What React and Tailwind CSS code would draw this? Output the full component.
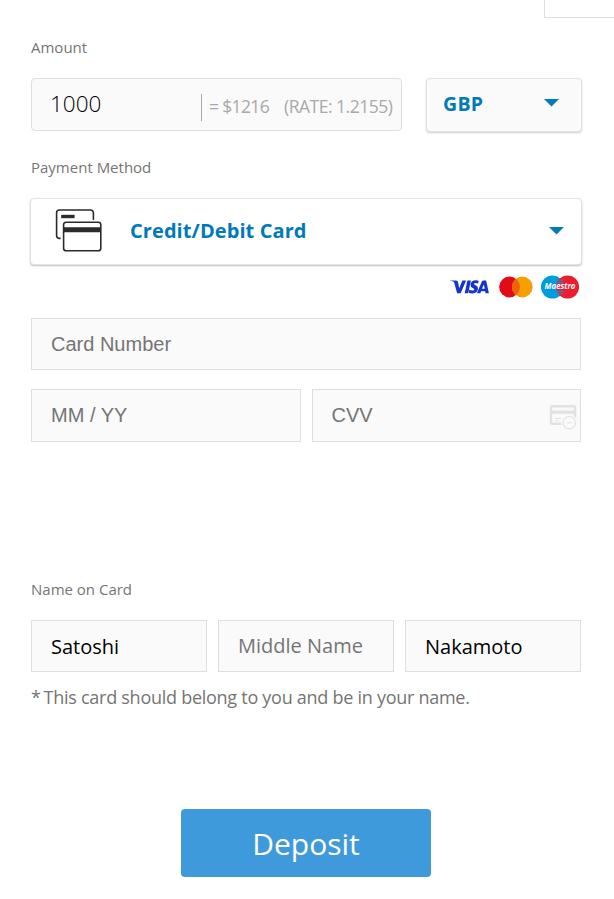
// DepositForm
import { useState } from 'react';

function Caret({ className = '' }) {
  return (
    <svg className={`shrink-0 ${className}`} width="15" height="8" viewBox="0 0 15 8">
      <path d="M0 0H15L7.5 7.5Z" fill="#007ab8" />
    </svg>
  );
}

function CardsIcon() {
  return (
    <svg className="-mt-[3px] shrink-0" width="47" height="43" viewBox="0 0 47 43" fill="none" stroke="#2b2b2b" strokeWidth="1.6" strokeLinecap="round">
      <path d="M5 29.4H4A2.8 2.8 0 0 1 1.6 26.6V3.8A2.8 2.8 0 0 1 4.4 1H35.6A2.8 2.8 0 0 1 38.4 3.8V10.5" />
      <path d="M6.2 7.5H19.6" strokeWidth="3.4" strokeLinecap="butt" />
      <rect x="8.6" y="13.2" width="37.2" height="28.6" rx="2.6" />
      <path d="M8.6 20.8H45.8" strokeWidth="5" strokeLinecap="butt" />
    </svg>
  );
}

function CvvIcon() {
  return (
    <svg className="absolute right-[4px] top-[15px]" width="28" height="26" viewBox="0 0 28 26" fill="none" stroke="#e2e2e2">
      <rect x="2" y="2.2" width="24" height="17.6" rx="1" strokeWidth="2.4" />
      <path d="M1 8.2H27" strokeWidth="3.2" />
      <path d="M6 14.5H12M6 17H10" />
      <circle cx="20.2" cy="18.7" r="8" fill="#fafafa" stroke="none" />
      <circle cx="20.2" cy="18.7" r="6.2" strokeWidth="1.2" />
      <path d="M18.2 18.7H22.2" strokeWidth="1.2" />
    </svg>
  );
}

function CardBrands() {
  return (
    <div className="flex items-center justify-end pr-[2px]">
      <svg width="39" height="14" viewBox="0 0 39 14" className="mr-[10px]" fill="#1434cb">
        <path d="M0 .5H6.2Q7.7 .5 8 2L9.2 8.3L12.4 .5H16.1L10.7 13.2H7.1L4.3 3Q4.1 2 3.2 1.6Q1.8 1 0 .8Z" />
        <path d="M17.4 .5H20.9L18.2 13.2H14.7Z" />
        <path d="M28.7 .8L28.1 3.6Q26.7 2.9 25.2 3Q24 3.1 24.1 3.9Q24.1 4.5 25.7 5.3Q28.3 6.6 28 8.8Q27.5 13.3 22.3 13.4Q20.2 13.4 18.7 12.7L19.3 9.8Q21 10.7 22.6 10.6Q24.2 10.5 24.3 9.5Q24.3 8.9 22.7 8.1Q20.3 6.9 20.5 4.6Q20.9 .5 25.7 .3Q27.4 .3 28.7 .8Z" />
        <path fillRule="evenodd" d="M33.3 .5H36.2L38.9 13.2H35.6L35.2 11.2H31.1L30.3 13.2H26.9L31.8 1.5Q32.2 .5 33.3 .5ZM33.9 4.6L32 8.7H34.7Z" />
      </svg>
      <svg width="34" height="22" viewBox="0 0 34 22" className="mr-[8px]">
        <circle cx="10.5" cy="11" r="10.4" fill="#e30b17" />
        <circle cx="23.3" cy="11" r="10.4" fill="#f79f00" />
        <path d="M16.9 2.8A10.4 10.4 0 0 1 16.9 19.2A10.4 10.4 0 0 1 16.9 2.8Z" fill="#eb6209" />
      </svg>
      <svg width="38" height="24" viewBox="0 0 38 24">
        <circle cx="11.4" cy="12" r="11.5" fill="#009ddd" />
        <circle cx="26.6" cy="12" r="11.5" fill="#ed1c2e" />
        <path d="M16 5.3H22M15.4 7.6H22.7M15.4 16.4H22.7M16 18.7H22" stroke="#009ddd" strokeWidth="1" />
        <text x="19" y="14.4" textAnchor="middle" textLength="31" lengthAdjust="spacingAndGlyphs" fill="#fff" fontFamily="Open Sans" fontSize="8.4" fontWeight="700" fontStyle="italic">Maestro</text>
      </svg>
    </div>
  );
}

function Field({ className = '', ...props }) {
  return (
    <input
      className={`block h-[52px] w-full min-w-0 border border-[#dfdfdf] bg-[#fafafa] px-[19px] text-[20px] text-black outline-none placeholder:text-[#757575] ${className}`}
      {...props}
    />
  );
}

export default function App() {
  const [amount, setAmount] = useState('1000');

  return (
    <div className="min-h-[899px] bg-white font-['Open_Sans',sans-serif] text-[#757575]">
      <div className="ml-auto h-[18px] w-[70px] border-b border-l border-[#dfdfdf]" />

      <div className="flex flex-col pl-[31px] pr-[33px]">
        <label className="mt-[17px] h-[43px] text-[15px] leading-[24px]">Amount</label>
        <div className="flex items-start">
          <div className="flex h-[53px] w-[371px] shrink-0 items-center rounded-[4px] border border-[#dfdfdf] bg-[#fafafa]">
            <input
              value={amount}
              onChange={(e) => setAmount(e.target.value)}
              className="h-full w-[169px] bg-transparent pb-[3px] pl-[18px] text-[22.5px] font-[350] text-black outline-none"
            />
            <div className="mt-[5px] flex h-[27px] items-center whitespace-pre border-l border-[#a9a9a9] pb-[2px] pl-[7px] text-[17.5px] tracking-[-0.5px] text-[#a9a9a9]">
              <span className="w-[75px] tracking-[-0.65px]">= $1216</span>
              <span>(RATE: 1.2155)</span>
            </div>
          </div>
          <button className="ml-[24px] flex h-[54px] w-[156px] shrink-0 items-center justify-between rounded-[4px] border border-[#e3e3e3] bg-[#fafafa] pb-[3px] pl-[16px] pr-[22px] text-[19.5px] font-bold tracking-[0.3px] text-[#007ab8] shadow-[0_1px_2px_rgba(0,0,0,0.2)]">
            GBP
            <Caret className="-mt-[2px]" />
          </button>
        </div>

        <label className="mt-[23px] h-[43px] text-[15px] leading-[24px]">Payment Method</label>
        <button className="-mx-px flex h-[67px] w-[552px] items-center rounded-[4px] border border-[#e3e3e3] bg-white pl-[24px] pr-[17px] text-[20px] font-bold text-[#007ab8] shadow-[0_1px_2px_rgba(0,0,0,0.25)]">
          <CardsIcon />
          <span className="-mt-[2px] ml-[28px] flex-1 text-left tracking-[0.08px]">Credit/Debit Card</span>
          <Caret className="-mt-[2px]" />
        </button>

        <div className="mt-[10px] h-[43px]">
          <CardBrands />
        </div>

        <Field placeholder="Card Number" className="font-['Liberation_Sans',sans-serif]" />
        <div className="mt-[19px] flex gap-[11px]">
          <div className="w-[270px]">
            <Field placeholder="MM / YY" className="h-[53px] font-['Liberation_Sans',sans-serif]" />
          </div>
          <div className="relative w-[269px]">
            <Field placeholder="CVV" className="h-[53px] pl-[18.5px] font-['Liberation_Sans',sans-serif]" />
            <CvvIcon />
          </div>
        </div>

        <label className="mt-[135px] h-[43px] text-[15px] leading-[24px]">Name on Card</label>
        <div className="grid grid-cols-3 gap-[11px]">
          <Field defaultValue="Satoshi" />
          <Field placeholder="Middle Name" className="pb-[2px]" />
          <Field defaultValue="Nakamoto" />
        </div>
        <p className="mt-[12px] text-[18px] leading-[27px] tracking-[-0.27px]">
          <span className="tracking-[-1px]">* </span>This card should belong to you and be in your name.
        </p>

        <button className="ml-[150px] mt-[98px] h-[68px] w-[250px] rounded-[4px] bg-[#3f9adc] text-[30px] text-white">
          Deposit
        </button>
      </div>
    </div>
  );
}
